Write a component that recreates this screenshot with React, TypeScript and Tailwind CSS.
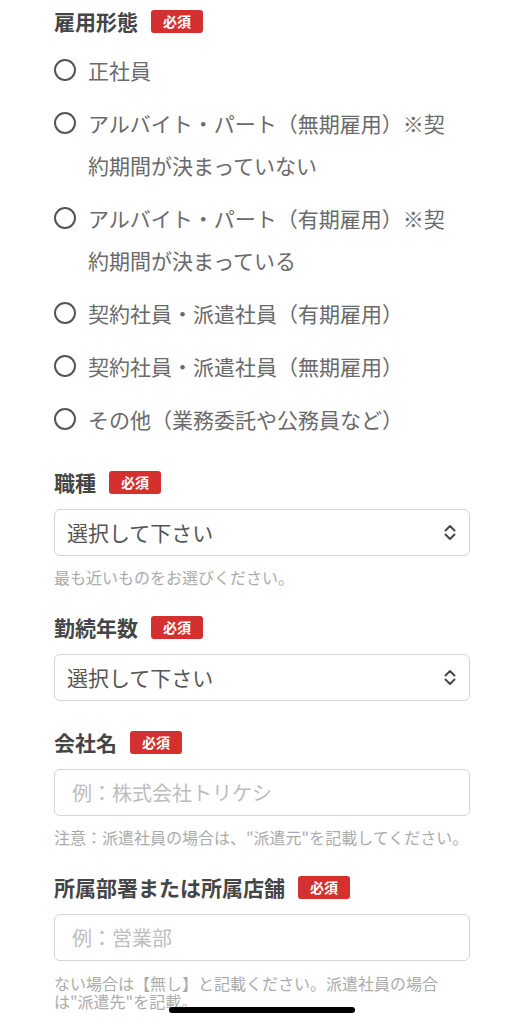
import React from 'react'

const font = { fontFamily: '"Noto Sans CJK JP", "Noto Sans", sans-serif' }

const employment = [
  '正社員',
  'アルバイト・パート（無期雇用）※契約期間が決まっていない',
  'アルバイト・パート（有期雇用）※契約期間が決まっている',
  '契約社員・派遣社員（有期雇用）',
  '契約社員・派遣社員（無期雇用）',
  'その他（業務委託や公務員など）',
]

function Badge() {
  return (
    <span className="ml-[13px] inline-flex h-[23px] items-center rounded-[3px] bg-[#d3302f] px-3 text-[14px] font-bold leading-none text-white">
      必須
    </span>
  )
}

function Label({ children }: { children: React.ReactNode }) {
  return (
    <div className="flex h-6 items-center">
      <span className="text-[21px] font-bold leading-none text-[#454545]">{children}</span>
      <Badge />
    </div>
  )
}

function UpDown() {
  return (
    <svg width="14" height="17" viewBox="0 0 14 17" fill="none" stroke="#4a4a4a" strokeWidth="2" strokeLinecap="round" strokeLinejoin="round">
      <polyline points="2.5,6.5 7,2 11.5,6.5" />
      <polyline points="2.5,10.5 7,15 11.5,10.5" />
    </svg>
  )
}

function SelectBox() {
  return (
    <div className="mt-[15px] flex h-[47px] items-center justify-between rounded-[6px] border border-[#d4d4d4] pl-3 pr-3">
      <span className="text-[21px] leading-none text-[#555]">選択して下さい</span>
      <UpDown />
    </div>
  )
}

function InputBox({ placeholder }: { placeholder: string }) {
  return (
    <div className="mt-[15px] flex h-[47px] items-center rounded-[6px] border border-[#d4d4d4] pl-[17px]">
      <span className="text-[20px] leading-none text-[#bdbdbd]">{placeholder}</span>
    </div>
  )
}

function Help({ children }: { children: React.ReactNode }) {
  return <p className="mt-[11px] text-[16px] leading-[20px] text-[#ababab]">{children}</p>
}

export default function App() {
  return (
    <div className="relative h-[1024px] w-[524px] overflow-hidden bg-white" style={font}>
      <div className="px-[54px] pt-[9px]">
        <Label>雇用形態</Label>
        <ul className="mt-[16px] flex flex-col gap-[11px]">
          {employment.map((t) => (
            <li key={t} className="flex items-start gap-3">
              <span className="flex h-[42px] items-center">
                <span className="block h-[22px] w-[22px] rounded-full border-[2.5px] border-[#555]" />
              </span>
              <span className="max-w-[366px] text-[21px] leading-[42px] text-[#6a6a6a]">{t}</span>
            </li>
          ))}
        </ul>

        <div className="mt-[30px]">
          <Label>職種</Label>
          <SelectBox />
          <Help>最も近いものをお選びください。</Help>
        </div>

        <div className="mt-[28px]">
          <Label>勤続年数</Label>
          <SelectBox />
        </div>

        <div className="mt-[29px]">
          <Label>会社名</Label>
          <InputBox placeholder="例：株式会社トリケシ" />
          <Help>注意：派遣社員の場合は、"派遣元"を記載してください。</Help>
        </div>

        <div className="mt-[28px]">
          <Label>所属部署または所属店舗</Label>
          <InputBox placeholder="例：営業部" />
          <div className="mt-[13px] text-[16px] leading-[18px] text-[#ababab]">
            <p className="h-[18px]">ない場合は【無し】と記載ください。派遣社員の場合</p>
            <p className="h-[18px]">は"派遣先"を記載。</p>
          </div>
        </div>
      </div>
      <div className="absolute left-[169px] top-[1007px] h-[6px] w-[186px] rounded-full bg-black" />
    </div>
  )
}
